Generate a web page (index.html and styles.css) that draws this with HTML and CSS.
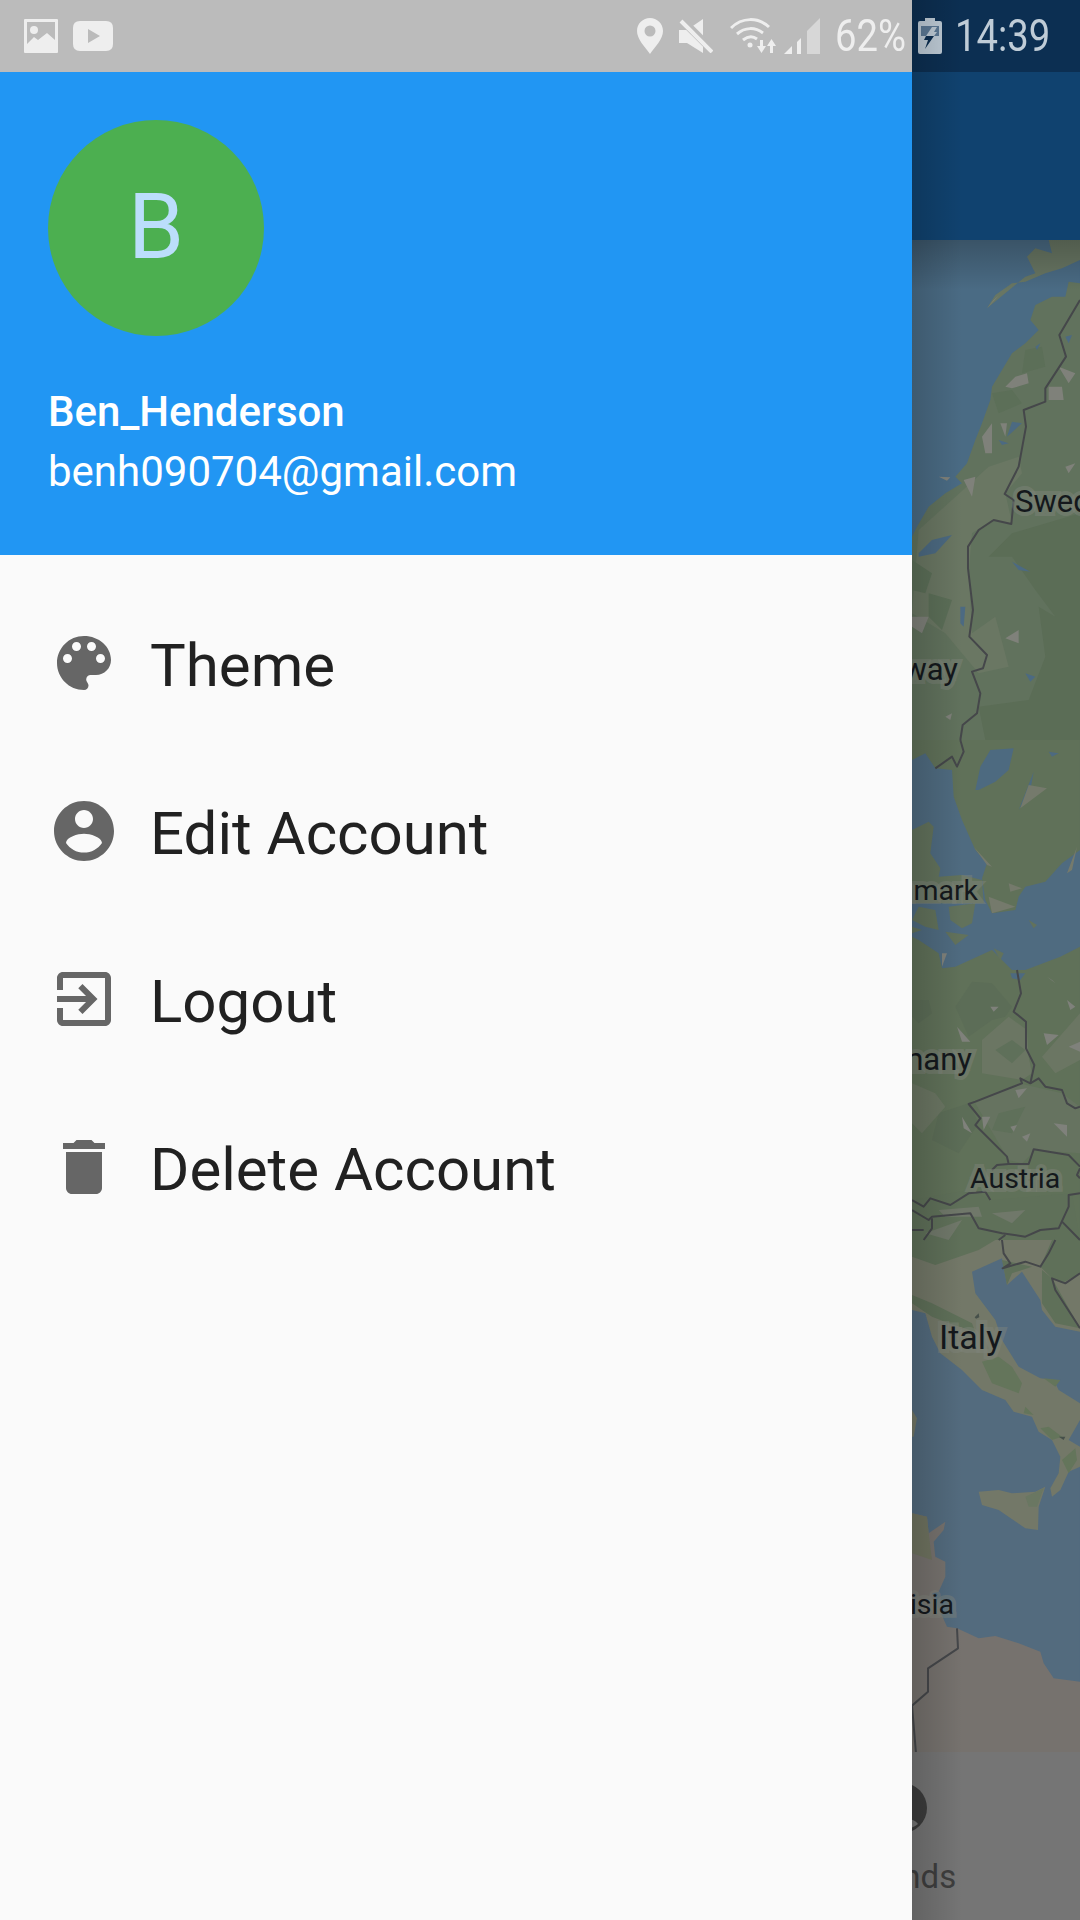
FILE: index.html
```html
<!DOCTYPE html>
<html lang="en">
  <head>
    <meta charset="UTF-8">
    <title>Drawer</title>
    <link rel="stylesheet" href="styles.css">
  </head>
  <body>

    <div class="drawer">
      <div class="status-bar">
        <div class="status-left">
          <svg class="st-picture" viewBox="0 0 34 34">
            <path fill="#eee" fill-rule="evenodd" d="M1 0h32a1 1 0 0 1 1 1v32a1 1 0 0 1-1 1H1a1 1 0 0 1-1-1V1a1 1 0 0 1 1-1zM3 3v22l7-7 4 3 9-7 8 7V3z"/>
            <circle cx="10" cy="11" r="4" fill="#eee"/>
          </svg>
          <svg class="st-youtube" viewBox="0 0 40 30">
            <path fill="#eee" fill-rule="evenodd" d="M7 0h26q7 0 7 7v16q0 7-7 7H7q-7 0-7-7V7q0-7 7-7zM15 8v14l12-7z"/>
          </svg>
        </div>
        <div class="status-right">
          <svg class="st-pin" viewBox="0 0 26 36">
            <path fill="#eee" fill-rule="evenodd" d="M13 0C6 0 0 5.500 0 13c0 8 8 16 13 23 5-7 13-15 13-23C26 5.500 20 0 13 0zm0 7.500a5.500 5.500 0 1 1 0 11 5.500 5.500 0 0 1 0-11z"/>
          </svg>
          <svg class="st-mute" viewBox="0 0 34 34">
            <path fill="#eee" d="M0 11H8L24 0V34L8 24H0z"/>
            <path stroke="#bbb" stroke-width="8" d="M1 -1L34 32"/>
            <path stroke="#eee" stroke-width="4" d="M2 2L33 33"/>
          </svg>
          <svg class="st-wifi" viewBox="0 0 48 36">
            <g fill="none" stroke="#eee" stroke-width="3">
              <path d="M1 10C12-1 28-1 39 9"/>
              <path d="M7 16c8-7 18-7 26-1"/>
              <path d="M13 22c5-4 10-4 14-1"/>
            </g>
            <circle cx="20" cy="27" r="2.500" fill="#eee"/>
            <path fill="#eee" d="M30 22h3v6h3l-4.500 7-4.500-7h3zM40 28h-3l4.500-7 4.500 7h-3v7h-3z"/>
          </svg>
          <svg class="st-signal" viewBox="0 0 36 36">
            <path fill="#eee" d="M0 36l8-8v8zM13 24l4-4v16h-4z"/>
            <path fill="#eee" opacity=".55" d="M23 13L36 0v36H23z"/>
          </svg>
          <span class="st-percent">62%</span>
        </div>
      </div>

      <div class="account">
        <div class="avatar">B</div>
        <div class="account-name">Ben_Henderson</div>
        <div class="account-email">benh090704@gmail.com</div>
      </div>

      <div class="menu">
        <div class="menu-item">
          <svg class="menu-icon" viewBox="0 0 24 24"><path d="M12 3c-4.970 0-9 4.030-9 9s4.030 9 9 9c.83 0 1.500-.67 1.500-1.500 0-.39-.15-.74-.39-1.010-.23-.26-.38-.61-.38-.99 0-.83.67-1.500 1.500-1.500H16c2.760 0 5-2.240 5-5 0-4.420-4.030-8-9-8zm-5.500 9c-.83 0-1.500-.67-1.500-1.500S5.670 9 6.500 9 8 9.670 8 10.500 7.330 12 6.500 12zm3-4C8.670 8 8 7.330 8 6.500S8.670 5 9.500 5s1.500.67 1.500 1.500S10.330 8 9.500 8zm5 0c-.83 0-1.500-.67-1.500-1.500S13.670 5 14.500 5s1.500.67 1.500 1.500S15.330 8 14.500 8zm3 4c-.83 0-1.500-.67-1.500-1.500S16.670 9 17.500 9s1.500.67 1.500 1.500-.67 1.500-1.500 1.500z"/></svg>
          <span>Theme</span>
        </div>
        <div class="menu-item">
          <svg class="menu-icon" viewBox="0 0 24 24"><path d="M12 2C6.480 2 2 6.480 2 12s4.480 10 10 10 10-4.480 10-10S17.520 2 12 2zm0 3c1.660 0 3 1.340 3 3s-1.340 3-3 3-3-1.340-3-3 1.340-3 3-3zm0 14.200c-2.500 0-4.710-1.280-6-3.220.03-1.990 4-3.080 6-3.080 1.990 0 5.970 1.090 6 3.080-1.290 1.940-3.500 3.220-6 3.220z"/></svg>
          <span>Edit Account</span>
        </div>
        <div class="menu-item">
          <svg class="menu-icon" viewBox="0 0 24 24"><path d="M10.090 15.590L11.500 17l5-5-5-5-1.410 1.410L12.670 11H3v2h9.670l-2.580 2.590zM19 3H5c-1.110 0-2 .9-2 2v4h2V5h14v14H5v-4H3v4c0 1.100.89 2 2 2h14c1.100 0 2-.9 2-2V5c0-1.100-.9-2-2-2z"/></svg>
          <span>Logout</span>
        </div>
        <div class="menu-item">
          <svg class="menu-icon" viewBox="0 0 24 24"><path d="M6 19c0 1.100.9 2 2 2h8c1.100 0 2-.9 2-2V7H6v12zM19 4h-3.500l-1-1h-5l-1 1H5v2h14V4z"/></svg>
          <span>Delete Account</span>
        </div>
      </div>
    </div>

    <div class="behind">
      <div class="behind-status">
        <svg class="st-battery" viewBox="0 0 24 36">
          <path fill="#bfccd7" d="M7 0h10v3h5q2 0 2 2v29q0 2-2 2H2q-2 0-2-2V5q0-2 2-2h5z"/>
          <path fill="#5d7a96" d="M3 8h18v10H3z"/>
          <path fill="#bfccd7" d="M14 9h5l-3 5h3l-3 4H8z"/>
          <path fill="#0c2f52" d="M8 18h8L7 31l3-9H6z"/>
        </svg>
        <span class="clock">14:39</span>
      </div>
      <div class="app-bar"></div>

      <svg class="map" viewBox="912 240 168 1512" preserveAspectRatio="none">
        <rect x="912" y="240" width="168" height="1512" fill="#4f6b80"/>

        <g class="map-land">
          <!-- each slice holds points read off a 3x crop: (912,240) (912,740) (912,1240) -->
          <g transform="translate(912 240) scale(.33333)">
            <path fill="#4a6b84" d="M0 0H504V1000H0z"/>
            <path fill="#687663" d="M225 205L250 165 300 130 340 125 400 100 450 85 504 60V0H410L420 40 370 25 345 50 370 100 340 110z"/>
            <path fill="#61725d" d="M504 130L470 125 460 170 420 170 370 195 355 240 380 270 340 310 300 340 270 390 240 440 235 480 210 550 190 600 165 670 130 710 150 730 100 760 50 800 15 860 0 890V1500H504z"/>
            <path fill="#6a7763" d="M20 870L120 780 230 680 320 650 330 700 280 760 300 850 240 840 180 880 170 1000 180 1180 250 1130 290 1280 200 1300 100 1180 0 1120z"/>
            <path fill="#5b6d56" d="M230 950L300 880 504 820V1500H220L200 1400 350 1380 400 1250 380 1100 430 1130 370 1050 300 950z"/>
            <path fill="#5c6f58" d="M240 460L300 450 330 490 260 520zM340 330L390 320 400 380 330 400zM50 1060L120 1080 90 1170 50 1130zM0 960L60 1000 40 1060 0 1050z"/>
            <path fill="#7f817a" d="M280 440L310 410 345 400 350 430 300 445zM410 440L450 440 455 480 410 480zM440 380L490 400 470 430zM210 590L240 550 240 640 220 640zM265 550L285 550 280 590zM460 680L490 670 470 700zM100 1430L120 1420 115 1440zM0 1130L50 1130 30 1180 0 1160zM280 1195L320 1170 320 1210zM155 720L190 710 180 770zM80 710L115 712 105 722zM225 205L262 165 245 180z"/>
            <path fill="#4c6a82" d="M20 940L60 900 120 885 70 940 20 950zM285 590L330 550 300 545zM260 600L290 610 270 615zM300 965L355 995 320 990zM145 1100L160 1100 155 1160 145 1150zM340 1300L370 1310 355 1325zM370 320L385 310 375 330zM460 290L480 285 470 310z"/>
          </g>

          <g transform="translate(912 740) scale(.33333)">
            <path fill="#607159" d="M0 0H504V1500H0z"/>
            <path fill="#4f6b80" d="M0 60L40 40 70 85 120 90 125 170 150 240 190 330 225 370 210 415 220 480 240 520 310 510 320 470 340 440 400 425 450 370 504 330V620L445 650 340 690 300 690 270 660 240 630 130 680 90 685 80 640 20 600 0 590z"/>
            <path fill="#4d6a80" d="M190 150L205 80 235 30 305 25 290 90 250 125 200 150zM320 210L365 95 355 150zM410 35L440 40 420 50zM295 700L340 700 325 720 300 715z"/>
            <path fill="#62725c" d="M0 380V270L50 245 65 260 55 340 85 385 80 410 150 405 210 420 215 490H0zM20 500L70 510 80 570 40 560 0 540zM110 500L190 490 180 550 150 565 115 540zM0 560L30 570 0 580zM100 575L170 585 130 615zM350 540L375 555 365 565zM245 625L275 640 265 660z"/>
            <path fill="#757a6c" d="M185 320L240 380 225 375zM290 430L330 445 295 455zM230 470L310 500 240 520zM465 400L495 320 480 390zM350 135L405 145 325 205z"/>
            <path fill="#5c6d57" d="M180 725L240 730 300 800 280 830 240 840 170 890 130 800zM0 780L50 780 60 820 20 850 0 830zM80 1120L170 1090 200 1150 140 1240 60 1200z"/>
            <path fill="#6b7663" d="M210 900L290 830 345 870 350 950 360 1000 330 1020 210 1000zM390 950L504 820V960L430 1000zM0 1030L70 1060 100 1100 30 1180 0 1150z"/>
            <path fill="#667360" d="M190 1090L320 1030 450 1060 504 1100V1240L370 1230 330 1270 290 1260z"/>
            <path fill="#5f705a" d="M260 1120L340 1100 300 1180 240 1170zM300 900L340 930 300 970 250 930z"/>
            <path fill="#5f7059" d="M0 1380L170 1350 240 1380 480 1360 504 1500H0z"/>
            <path fill="#70786a" d="M80 1410L200 1400 210 1430 100 1430zM40 1480L150 1440 110 1500zM240 1420L340 1410 300 1450z"/>
            <path fill="#7f817b" d="M135 860L175 905 150 905zM235 800L260 800 245 815zM395 880L440 885 405 915zM210 1130L235 1130 215 1170zM330 1190L355 1180 345 1205zM425 1150L465 1155 465 1190zM310 1050L345 1045 320 1075zM405 710L430 730 420 720zM465 780L490 800 475 810zM295 1160L315 1155 305 1175zM90 640L105 640 90 680zM470 920L504 905V935zM150 1130L180 1180 155 1165z"/>
          </g>

          <g transform="translate(912 1240) scale(.33333)">
            <path fill="#536b7e" d="M0 0H504V1540H0z"/>
            <path fill="#737868" d="M0 0H504V680L470 695 445 750 420 770 415 745 440 700 445 650 420 600 380 575 360 530 305 515 280 480 210 450 150 390 85 340 60 290 40 220 0 210z"/>
            <path fill="#536b7e" d="M180 95L270 55 285 135 330 95 385 180 390 210 430 260 504 275V490L440 450 425 420 385 415 320 380 270 300 250 240 190 160zM504 540L470 600 504 620z"/>
            <path fill="#5f7059" d="M0 0H250L200 30 70 75 0 50zM0 165L60 190 180 250 190 275 110 250 60 230 0 190zM390 90L420 115 504 265 430 250 390 190zM420 0H504V100L450 130 420 115 385 80zM270 60L360 80 300 100 285 135z"/>
            <path fill="#64755b" d="M210 365L260 350 300 380 330 430 320 460 240 430zM450 660L490 625 495 660 470 700zM385 565L410 560 450 590 420 600zM340 500L365 525 335 520zM395 415L445 420 430 440z"/>
            <path fill="#737868" d="M200 755L260 750 300 760 370 755 400 740 380 800 378 870 340 865 260 810 210 795z"/>
            <path fill="#6a7762" d="M340 770L395 745 375 800 350 800z"/>
            <path fill="#737868" d="M0 510L15 535 5 590 0 590z"/>
            <path fill="#76726e" d="M0 820L45 830 50 880 100 845 95 870 65 905 70 950 100 965 100 1010 80 1055 60 1060 105 1160 135 1165 200 1195 250 1188 320 1210 385 1235 395 1270 425 1315 504 1325V1540H0z"/>
            <path fill="#6f7360" d="M0 820L45 830 50 880 60 960 0 940z"/>
            <path fill="#46504a" d="M188 232L200 220 202 232 192 236zM440 590L460 590 455 600z"/>
          </g>
        </g>

        <g class="map-borders">
          <g transform="translate(912 240) scale(.33333)">
            <path d="M504 180L442 285 462 350 400 445 400 485 335 510 342 560 320 680 278 762 305 780 298 852 245 840 200 870 168 920 168 985 183 1110 172 1190 225 1245 213 1285 180 1295 205 1360 195 1420 152 1455 145 1500"/>
          </g>
          <g transform="translate(912 740) scale(.33333)">
            <path d="M145 0L155 35 135 80 120 50 70 85"/>
            <path d="M315 690L327 760 305 815 342 845 342 925 367 975 355 1030 325 1015 330 1030 190 1085 170 1092 205 1135 190 1155 285 1250 290 1272 350 1272 365 1228 470 1245 504 1280"/>
            <path d="M355 1030L380 1015 400 1040 450 1050 465 1090 490 1105 504 1100"/>
            <path d="M290 1272L255 1275 240 1290M235 1380L220 1355 170 1360 115 1395 55 1375 35 1400 0 1380"/>
            <path d="M0 1410L50 1440 60 1430 175 1420 200 1465 270 1480 340 1490 385 1470 440 1465 470 1400 470 1365 504 1360"/>
            <path d="M35 1500L60 1465 60 1435M0 1470H35M450 1445L504 1500M280 1485L260 1500M504 1285L495 1305 504 1315"/>
          </g>
          <g transform="translate(912 1240) scale(.33333)">
            <path d="M270 0L275 40 295 70 272 85 340 65 385 80 410 40 430 0"/>
            <path d="M504 100L460 130 420 115 430 150 504 265"/>
            <path d="M135 1165L138 1225 48 1285 48 1355 0 1397 12 1540"/>
          </g>
        </g>

        <g class="map-labels">
          <text class="map-label-mid" x="1015" y="512">Sweden</text>
          <text class="map-label-mid" x="958" y="680" text-anchor="end">Norway</text>
          <text x="978" y="900" text-anchor="end">Denmark</text>
          <text class="map-label-mid" x="972" y="1070" text-anchor="end">Germany</text>
          <text x="970" y="1188">Austria</text>
          <text class="map-label-big" x="939" y="1349">Italy</text>
          <text x="954" y="1614" text-anchor="end">Tunisia</text>
        </g>
      </svg>

      <div class="bottom-nav">
        <div class="nav-item">
          <svg class="nav-icon" viewBox="0 0 50 50">
            <circle cx="25" cy="25" r="25" fill="#3c3c3c"/>
            <path fill="#757575" d="M9 41c5-8 27-8 32 0-8 7-24 7-32 0z"/>
          </svg>
          <span>Friends</span>
        </div>
      </div>

      <div class="app-bar-shadow"></div>
      <div class="drawer-shadow"></div>
    </div>

  </body>
</html>
```

FILE: styles.css
```css
* {
  box-sizing: border-box;
  margin: 0;
  padding: 0;
}

body {
  width: 1080px;
  height: 1920px;
  display: flex;
  font-family: Roboto, "Liberation Sans", sans-serif;
  overflow: hidden;
}

.drawer {
  width: 912px;
  background-color: #fafafa;
  display: flex;
  flex-direction: column;
}

.status-bar {
  height: 72px;
  background-color: #bbbbbb;
  display: flex;
  justify-content: space-between;
  align-items: center;
  padding: 0 7px 0 24px;
}

.status-left,
.status-right {
  display: flex;
  align-items: center;
}

.status-left {
  gap: 15px;
}

.status-right {
  height: 72px;
}

.st-picture {
  width: 34px;
  height: 34px;
}

.st-youtube {
  width: 40px;
  height: 30px;
}

.st-pin {
  width: 26px;
  height: 36px;
  margin-right: 16px;
}

.st-mute {
  width: 34px;
  height: 34px;
  margin-right: 17px;
}

.st-wifi {
  width: 48px;
  height: 36px;
  margin-right: 6px;
}

.st-signal {
  width: 36px;
  height: 36px;
  margin-right: 15px;
}

.st-percent,
.clock {
  display: block;
  font-size: 45px;
  line-height: 72px;
  white-space: nowrap;
  transform: scaleX(.85);
  transform-origin: left center;
}

.st-percent {
  width: 70px;
  color: #eeeeee;
}

.account {
  height: 483px;
  background-color: #2196f3;
  color: white;
  padding: 48px 48px 0;
}

.avatar {
  width: 216px;
  height: 216px;
  border-radius: 50%;
  background-color: #4caf50;
  color: #bbdefb;
  font-size: 90px;
  line-height: 216px;
  text-align: center;
  margin-bottom: 46px;
}

.account-name,
.account-email {
  font-size: 42px;
  line-height: 60px;
}

.account-name {
  font-weight: 500;
}

.menu {
  padding-top: 26px;
}

.menu-item {
  height: 168px;
  display: flex;
  align-items: center;
  padding-left: 48px;
  gap: 30px;
  font-size: 60px;
  color: #212121;
}

.menu-icon {
  width: 72px;
  height: 72px;
  margin-top: -4px;
  fill: #666666;
}

.behind {
  position: relative;
  width: 168px;
  display: flex;
  flex-direction: column;
  overflow: hidden;
}

.behind-status {
  height: 72px;
  background-color: #0c2f52;
  display: flex;
  align-items: center;
  padding-left: 6px;
}

.st-battery {
  width: 24px;
  height: 36px;
  margin-right: 13px;
}

.clock {
  width: 93px;
  color: #bfccd7;
}

.app-bar {
  height: 168px;
  background-color: #10426f;
}

.map {
  display: block;
  width: 168px;
  height: 1512px;
}

.map-land {
  filter: blur(0.7px);
}

.map-borders path {
  fill: none;
  stroke: #45474a;
  stroke-width: 6px;
  stroke-linejoin: round;
}

.map-labels text {
  font-size: 28.500px;
  fill: #14181c;
  stroke: rgba(128, 133, 124, 0.45);
  stroke-width: 8px;
  paint-order: stroke;
}

.map-labels .map-label-mid {
  font-size: 31px;
}

.map-labels .map-label-big {
  font-size: 34px;
}

.bottom-nav {
  height: 168px;
  background-color: #757575;
  overflow: hidden;
}

.nav-item {
  width: 120px;
  margin-left: -70px;
  padding-top: 31px;
  display: flex;
  flex-direction: column;
  align-items: center;
  color: #3e3e3e;
  font-size: 33px;
  line-height: 40px;
}

.nav-icon {
  width: 50px;
  height: 50px;
  margin-bottom: 24px;
}

/* shadows falling on what is behind the bars */
.app-bar-shadow {
  position: absolute;
  left: 0;
  right: 0;
  top: 240px;
  height: 50px;
  background: linear-gradient(to bottom, rgba(0, 0, 0, 0.22), rgba(0, 0, 0, 0));
}

.drawer-shadow {
  position: absolute;
  left: 0;
  top: 0;
  bottom: 0;
  width: 50px;
  background: linear-gradient(to right, rgba(0, 0, 0, 0.16), rgba(0, 0, 0, 0));
}
```
